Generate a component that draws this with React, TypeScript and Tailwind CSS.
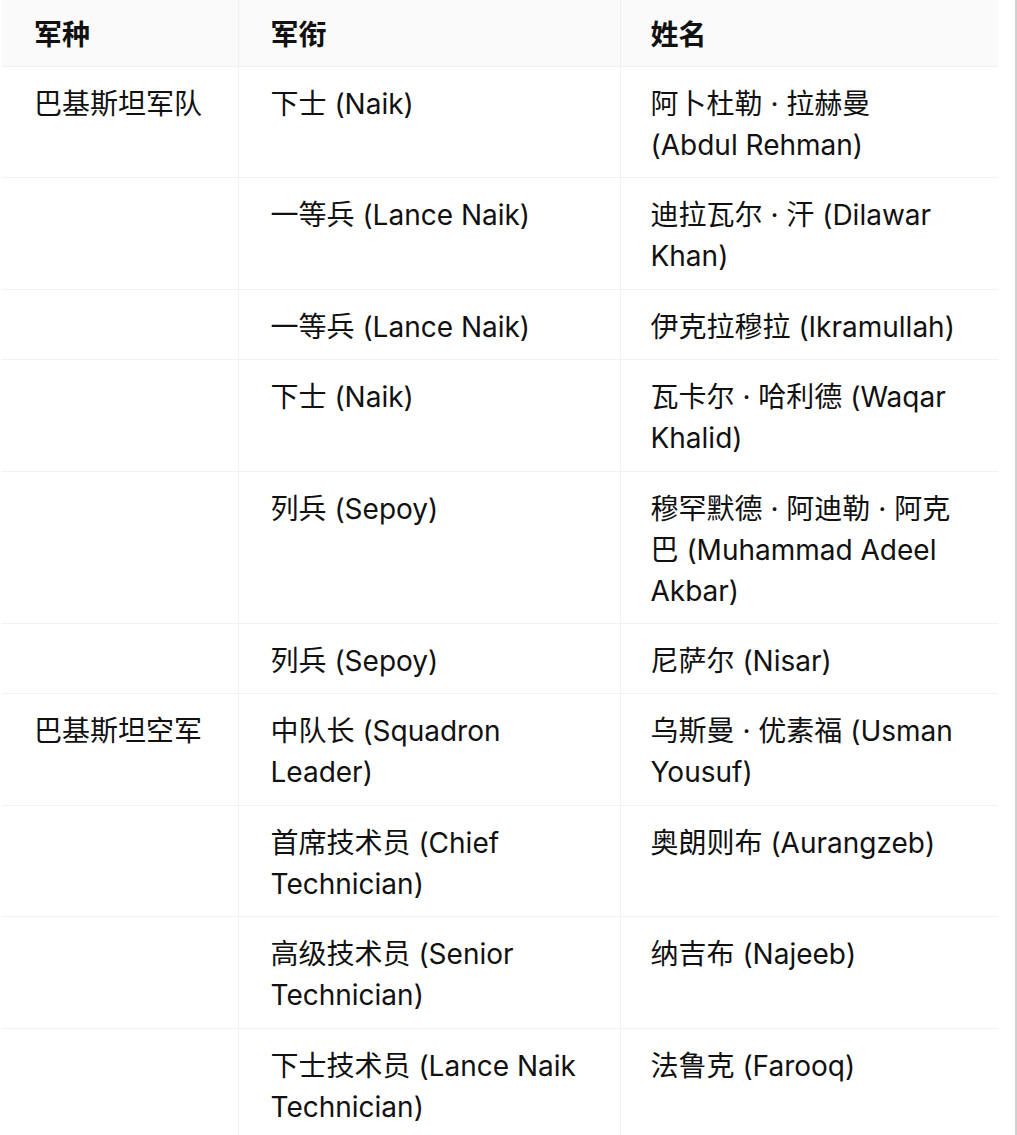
const rows: [string, string, string][] = [
  ["巴基斯坦军队", "下士 (Naik)", "阿卜杜勒 · 拉赫曼 (Abdul\u00a0Rehman)"],
  ["", "一等兵 (Lance Naik)", "迪拉瓦尔 · 汗 (Dilawar Khan)"],
  ["", "一等兵 (Lance Naik)", "伊克拉穆拉 (Ikramullah)"],
  ["", "下士 (Naik)", "瓦卡尔 · 哈利德 (Waqar Khalid)"],
  ["", "列兵 (Sepoy)", "穆罕默德 · 阿迪勒 · 阿克巴 (Muhammad Adeel Akbar)"],
  ["", "列兵 (Sepoy)", "尼萨尔 (Nisar)"],
  ["巴基斯坦空军", "中队长 (Squadron Leader)", "乌斯曼 · 优素福 (Usman Yousuf)"],
  ["", "首席技术员 (Chief Technician)", "奥朗则布 (Aurangzeb)"],
  ["", "高级技术员 (Senior Technician)", "纳吉布 (Najeeb)"],
  ["", "下士技术员 (Lance Naik Technician)", "法鲁克 (Farooq)"],
];

export default function App() {
  return (
    <div className="flex min-h-screen w-[1017px] bg-white font-['Inter','Noto_Sans_CJK_SC',sans-serif] text-[28px] leading-[41px] text-[#111]">
      <div className="w-[2px] shrink-0" />
      <table className="w-[996px] shrink-0 table-fixed border-collapse self-start">
        <colgroup>
          <col className="w-[236px]" />
          <col className="w-[382px]" />
          <col className="w-[378px]" />
        </colgroup>
        <thead>
          <tr className="bg-[#fafafa]">
            <th className="border-b border-r border-[#f0f0f0] pl-8 pr-6 pt-[15px] pb-[10px] text-left font-bold">军种</th>
            <th className="border-b border-r border-[#f0f0f0] pl-8 pr-6 pt-[15px] pb-[10px] text-left font-bold">军衔</th>
            <th className="border-b border-[#f0f0f0] pl-[30px] pr-6 pt-[15px] pb-[10px] text-left font-bold">姓名</th>
          </tr>
        </thead>
        <tbody>
          {rows.map((r, i) => (
            <tr key={i}>
              <td className="border-b border-r border-[#f2f2f2] pl-8 pr-6 pt-[17px] pb-[11.4px] align-top">{r[0]}</td>
              <td className="border-b border-r border-[#f2f2f2] pl-8 pr-6 pt-[17px] pb-[11.4px] align-top">{r[1]}</td>
              <td className="border-b border-[#f2f2f2] pl-[30px] pr-6 pt-[17px] pb-[11.4px] align-top">{r[2]}</td>
            </tr>
          ))}
        </tbody>
      </table>
      <div className="flex-1" />
      <div className="w-[2px] shrink-0 bg-[#cfcfcf]" />
    </div>
  );
}
